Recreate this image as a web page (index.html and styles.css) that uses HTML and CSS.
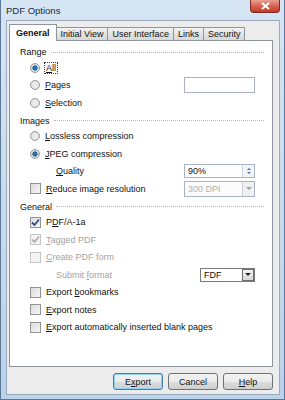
FILE: index.html
```html
<!DOCTYPE html>
<html lang="en">
<head>
  <meta charset="UTF-8">
  <title>PDF Options</title>
  <link rel="stylesheet" href="styles.css">
</head>
<body>
  <div class="window">
    <div class="titlebar">
      <span class="title">PDF Options</span>
      <span class="close">
        <svg width="9" height="8" viewBox="0 0 9 8"><path d="M1 1 L8 7 M8 1 L1 7" stroke="#fff" stroke-width="2"/></svg>
      </span>
    </div>

    <div class="client">
      <div class="tabs">
        <span class="tab active">General</span>
        <span class="tab">Initial View</span>
        <span class="tab">User Interface</span>
        <span class="tab">Links</span>
        <span class="tab">Security</span>
      </div>

      <div class="panel">
        <div class="section">
          <div class="heading"><span>Range</span></div>
          <div class="row"><span class="radio on"></span><span class="focus"><u>A</u>ll</span></div>
          <div class="row"><span class="radio"></span><span><u>P</u>ages</span><span class="field pages"></span></div>
          <div class="row"><span class="radio"></span><span><u>S</u>election</span></div>
        </div>

        <div class="section">
          <div class="heading"><span>Images</span></div>
          <div class="row"><span class="radio"></span><span><u>L</u>ossless compression</span></div>
          <div class="row"><span class="radio on"></span><span><u>J</u>PEG compression</span></div>
          <div class="row sub">
            <span class="label"><u>Q</u>uality</span>
            <span class="field spin">90%<span class="spinbtn"><i class="up"></i><i class="down"></i></span></span>
          </div>
          <div class="row"><span class="check"></span><span><u>R</u>educe image resolution</span>
            <span class="field combo disabled">300 DPI<span class="drop"><i></i></span></span>
          </div>
        </div>

        <div class="section">
          <div class="heading"><span>General</span></div>
          <div class="row"><span class="check">
            <svg width="9" height="9" viewBox="0 0 9 9"><path d="M1 4.5 L3.5 7 L8 1.5" stroke="#2a4f8a" stroke-width="1.8" fill="none"/></svg>
          </span><span>P<u>D</u>F/A-1a</span></div>
          <div class="row disabled"><span class="check">
            <svg width="9" height="9" viewBox="0 0 9 9"><path d="M1 4.5 L3.5 7 L8 1.5" stroke="#b0b0b0" stroke-width="1.8" fill="none"/></svg>
          </span><span><u>T</u>agged PDF</span></div>
          <div class="row disabled"><span class="check"></span><span><u>C</u>reate PDF form</span></div>
          <div class="row sub">
            <span class="label disabled">Submit <u>f</u>ormat</span>
            <span class="field combo fdf">FDF<span class="drop"><i></i></span></span>
          </div>
          <div class="row"><span class="check"></span><span>Export <u>b</u>ookmarks</span></div>
          <div class="row"><span class="check"></span><span><u>E</u>xport notes</span></div>
          <div class="row"><span class="check"></span><span><u>E</u>xport automatically inserted blank pages</span></div>
        </div>
      </div>

      <div class="buttons">
        <button class="btn default">E<u>x</u>port</button>
        <button class="btn">Cancel</button>
        <button class="btn"><u>H</u>elp</button>
      </div>
    </div>
  </div>
</body>
</html>
```

FILE: styles.css
```css
body {
  margin: 0;
  font-family: "Liberation Sans", Arial, sans-serif;
  font-size: 9px;
  color: #111;
}

u {
  text-decoration: underline;
  text-underline-offset: 1px;
}

.window {
  width: 285px;
  height: 400px;
  box-sizing: border-box;
  background: linear-gradient(180deg, #d6e5f4 0%, #c6daee 60%, #bad2ea 100%);
  border: 1px solid #5d7896;
  border-top: none;
  display: flex;
  flex-direction: column;
}

.titlebar {
  height: 20px;
  display: flex;
  justify-content: space-between;
  align-items: flex-start;
  padding-left: 5px;
}

.title {
  margin-top: 5px;
  font-size: 9.5px;
  color: #1e2a38;
}

.close {
  width: 30px;
  height: 13px;
  margin-right: 4px;
  box-sizing: border-box;
  display: flex;
  align-items: center;
  justify-content: center;
  border: 1px solid #7a2b22;
  border-top: none;
  border-radius: 0 0 4px 4px;
  background: linear-gradient(180deg, #e8a194 0%, #d7624f 50%, #c23c28 100%);
}

.client {
  flex: 1;
  margin: 0 4px 4px 5px;
  background: #ececec;
  border: 1px solid #9aaabd;
  padding: 2px 6px 0 2px;
  display: flex;
  flex-direction: column;
}

.tabs {
  display: flex;
  align-items: flex-end;
  height: 17px;
}

.tab {
  height: 13px;
  box-sizing: border-box;
  padding: 0 4px;
  line-height: 12px;
  border: 1px solid #8e959e;
  border-bottom: none;
  border-left: none;
  background: linear-gradient(180deg, #f4f4f4 0%, #e3e3e3 50%, #d8d8d8 100%);
}

.tab.active {
  height: 17px;
  line-height: 16px;
  padding: 0 6px;
  font-weight: bold;
  background: #fff;
  border-left: 1px solid #8e959e;
  margin-bottom: -1px;
  position: relative;
  z-index: 1;
}

.panel {
  height: 327px;
  box-sizing: border-box;
  background: #fff;
  border: 1px solid #8e959e;
  padding: 4px 8px 0 10px;
}

.section {
  margin-top: 2px;
}

.section:first-child {
  margin-top: 0;
}

.heading {
  height: 14px;
  display: flex;
  align-items: center;
  gap: 4px;
}

.heading::after {
  content: "";
  flex: 1;
  border-top: 1px dotted #b8b8b8;
}

.row {
  height: 17.5px;
  display: flex;
  align-items: center;
  padding: 0 9px 0 10px;
}

.row.sub {
  padding-left: 36px;
}

.disabled {
  color: #a3a3a3;
}

.radio {
  width: 10px;
  height: 10px;
  box-sizing: border-box;
  border-radius: 50%;
  border: 1px solid #9a9a9a;
  background: radial-gradient(circle, #f2f2f2 0%, #d8d8d8 100%);
  margin-right: 5px;
  flex: none;
}

.radio.on {
  background: radial-gradient(circle, #2b8ad8 0%, #1a5c9a 40%, #e0e0e0 52%, #d0d0d0 100%);
}

.check {
  width: 11px;
  height: 11px;
  box-sizing: border-box;
  border: 1px solid #939393;
  background: linear-gradient(135deg, #dcdcdc 0%, #f6f6f6 100%);
  margin-right: 5px;
  flex: none;
  display: flex;
  align-items: center;
  justify-content: center;
}

.disabled .check {
  border-color: #c4c4c4;
  background: #f4f4f4;
}

.focus {
  outline: 1px dotted #333;
  padding: 0 1px;
}

.field {
  margin-left: auto;
  width: 71px;
  height: 16px;
  box-sizing: border-box;
  border: 1px solid #a7b2c6;
  background: #fff;
  display: flex;
  align-items: center;
  padding-left: 3px;
}

.spin {
  height: 14px;
}

.spinbtn {
  margin-left: auto;
  width: 11px;
  height: 12px;
  border-left: 1px solid #cdd3dd;
  display: flex;
  flex-direction: column;
  align-items: center;
  justify-content: center;
  gap: 2px;
  background: #f4f4f4;
}

.spinbtn i {
  width: 0;
  height: 0;
  border-left: 2px solid transparent;
  border-right: 2px solid transparent;
}

.spinbtn .up {
  border-bottom: 2px solid #3a6fb0;
}

.spinbtn .down {
  border-top: 2px solid #3a6fb0;
}

.combo .drop {
  margin-left: auto;
  width: 12px;
  height: 14px;
  box-sizing: border-box;
  border-left: 1px solid #c9ced6;
  background: #f0f0f0;
  display: flex;
  align-items: center;
  justify-content: center;
}

.combo .drop i {
  width: 0;
  height: 0;
  border-left: 3px solid transparent;
  border-right: 3px solid transparent;
  border-top: 3px solid #222;
}

.combo.disabled {
  color: #b0b0b0;
  background: #fbfbfb;
}

.combo.disabled .drop i {
  border-top-color: #a0a0a0;
}

.fdf {
  width: 55px;
  height: 14px;
  border-color: #7a7a7a;
}

.fdf .drop {
  height: 12px;
  border: 1px solid #6d6d6d;
  background: linear-gradient(180deg, #f5f5f5, #d6d6d6);
}

.buttons {
  display: flex;
  justify-content: flex-end;
  gap: 5px;
  margin-top: 6px;
}

.btn {
  width: 50px;
  height: 17px;
  padding: 0;
  font: inherit;
  color: #111;
  border: 1px solid #707070;
  border-radius: 3px;
  background: linear-gradient(180deg, #f2f2f2 0%, #ebebeb 50%, #dddddd 51%, #cfcfcf 100%);
}

.btn.default {
  border-color: #3c7fb1;
  box-shadow: inset 0 0 0 1px #8fd2f2;
}
```
